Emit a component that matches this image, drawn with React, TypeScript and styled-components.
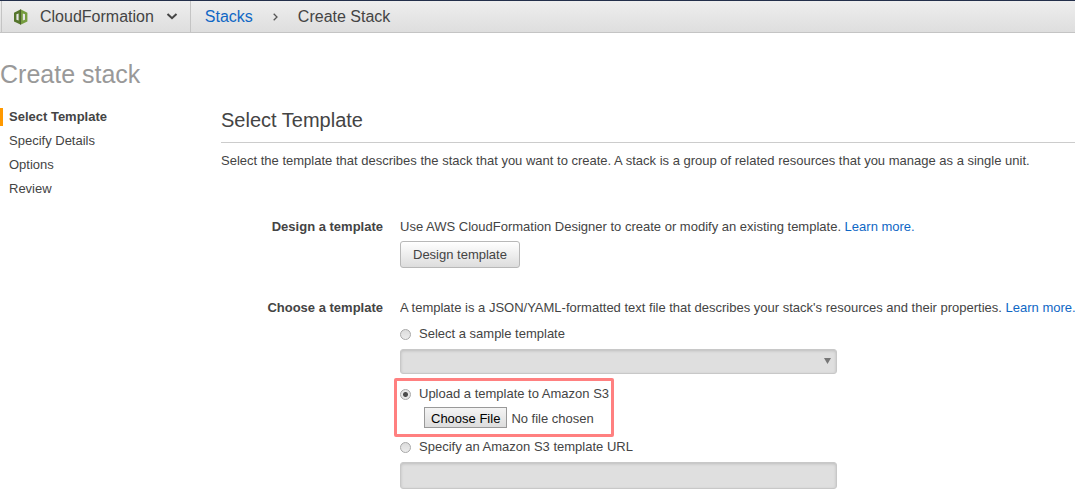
import React, { useState } from 'react';
import styled, { createGlobalStyle } from 'styled-components';

const GlobalStyle = createGlobalStyle`
  *, *::before, *::after { box-sizing: border-box; }
  body {
    margin: 0;
    background: #fff;
    color: #444;
    font: 13px/18px "Liberation Sans", Arial, sans-serif;
  }
  h1, h2, p { margin: 0; font-weight: normal; }
`;

const TopBar = styled.header`
  display: flex;
  align-items: stretch;
  height: 33px;
  border-top: 1px solid #232f4b;
  border-bottom: 1px solid #c4c4c4;
  background: linear-gradient(#eeeeee, #dedede);
  font-size: 16px;
`;

const ServiceMenu = styled.button`
  display: flex;
  align-items: center;
  margin: 0 0 0 1px;
  padding: 0 12px 0 11px;
  border: solid #c4c4c4;
  border-width: 0 1px;
  background: none;
  color: #444;
  font: inherit;
`;

const ServiceName = styled.span`
  padding: 0 12px 0 11px;
`;

const Breadcrumbs = styled.nav`
  display: flex;
  align-items: center;
  gap: 20px;
  padding-left: 14px;
`;

const Link = styled.a`
  color: #0f67c5;
  text-decoration: none;
`;

const PageTitle = styled.h1`
  padding: 27px 0 19px;
  color: #999;
  font-size: 25px;
  line-height: 29px;
`;

const Layout = styled.div`
  display: grid;
  grid-template-columns: 221px minmax(0, 1fr);
`;

const Steps = styled.nav`
  display: flex;
  flex-direction: column;
  gap: 6px;
`;

const Step = styled.a<{ $active?: boolean }>`
  padding-left: 6px;
  border-left: 3px solid ${(p) => (p.$active ? '#ff9900' : 'transparent')};
  color: #444;
  font-weight: ${(p) => (p.$active ? 'bold' : 'normal')};
  text-decoration: none;
`;

const SectionTitle = styled.h2`
  padding-bottom: 10px;
  border-bottom: 1px solid #ccc;
  font-size: 20px;
  line-height: 24px;
`;

const Intro = styled.p`
  padding: 9px 0 48px;
`;

const FormRow = styled.section`
  display: grid;
  grid-template-columns: 162px minmax(0, 1fr);
  column-gap: 17px;
  margin-bottom: 31px;
  &:last-child { margin-bottom: 0; }
`;

const RowLabel = styled.div`
  font-weight: bold;
  text-align: right;
`;

const RowBody = styled.div`
  display: flex;
  flex-direction: column;
  align-items: flex-start;
`;

const Description = styled.p`
  max-width: 100%;
  overflow: hidden;
  white-space: nowrap;
`;

const DesignButton = styled.button`
  height: 27px;
  margin-top: 5px;
  padding: 0 12px;
  border: 1px solid #b8b8b8;
  border-radius: 3px;
  background: linear-gradient(#ffffff, #dddddd);
  color: #444;
  font: inherit;
`;

const SourceOptions = styled.div`
  display: flex;
  flex-direction: column;
  width: 437px;
  max-width: 100%;
  margin-top: 7px;
`;

const RadioLabel = styled.label`
  display: flex;
  align-items: center;
  gap: 8px;
  height: 20px;
  white-space: nowrap;
`;

const Radio = styled.input`
  appearance: none;
  flex: none;
  width: 11px;
  height: 11px;
  margin: 0;
  border: 1px solid #a8a8a8;
  border-radius: 50%;
  background: linear-gradient(#dcdcdc, #ececec);
  &:checked {
    background: radial-gradient(circle, #4c4c4c 2px, #e6e6e6 3px);
  }
`;

const SelectField = styled.div`
  display: grid;
  align-items: center;
  margin: 5px 0 4px;
  > * { grid-area: 1 / 1; }
  > svg { justify-self: end; z-index: 1; margin: 0 6px 2px 0; pointer-events: none; }
`;

const Select = styled.select`
  appearance: none;
  width: 100%;
  height: 25px;
  border: 1px solid #c8c8c8;
  border-radius: 3px;
  background: #dfdfdf;
  box-shadow: inset 0 1px 3px #bdbdbd;
  font: inherit;
  &:disabled { opacity: 1; }
`;

const UrlInput = styled.input`
  width: 100%;
  height: 27px;
  margin-top: 5px;
  border: 1px solid #c8c8c8;
  border-radius: 3px;
  background: #dfdfdf;
  box-shadow: inset 0 1px 3px #bdbdbd;
  font: inherit;
`;

const Highlight = styled.div`
  align-self: flex-start;
  width: 220px;
  margin-left: -6px;
  padding: 3px;
  border: 3px solid #ff8080;
  border-radius: 2px;
`;

const FileInput = styled.input`
  display: block;
  width: 180px;
  height: 21px;
  margin: 3px 0 3px 24px;
  color: #444;
  font: inherit;
  line-height: 21px;
  &::file-selector-button {
    height: 21px;
    margin: 0 4px 0 0;
    padding: 0 6px;
    border: 1px solid #999;
    border-radius: 0;
    background: linear-gradient(#f4f4f4, #dddddd);
    color: #000;
    font: inherit;
  }
`;

type Source = 'sample' | 'upload' | 'url';

const steps = ['Select Template', 'Specify Details', 'Options', 'Review'];

function CloudFormationIcon() {
  return (
    <svg width="16" height="16" viewBox="0 0 16 16" aria-hidden="true">
      <path d="M1 3.8 L7.4 0.4 V15.6 L1 12.6Z M3.4 5.2 V10.8 L5.6 11.4 V4.6Z" fill="#55752c" fillRule="evenodd" />
      <path d="M14.4 3.8 L8 0.4 V15.6 L14.4 12.6Z M12 5.2 V10.8 L9.8 11.4 V4.6Z" fill="#759c3e" fillRule="evenodd" />
      <path d="M7 0.6 L8 0.2 V15.8 L7 15.4Z" fill="#4b612c" />
    </svg>
  );
}

export default function App() {
  const [source, setSource] = useState<Source>('upload');
  return (
    <>
      <GlobalStyle />
      <TopBar>
        <ServiceMenu type="button">
          <CloudFormationIcon />
          <ServiceName>CloudFormation</ServiceName>
          <svg width="12" height="7" viewBox="0 0 12 7" aria-hidden="true">
            <path d="M1.5 1 L6 5.2 L10.5 1" fill="none" stroke="#444" strokeWidth="2" />
          </svg>
        </ServiceMenu>
        <Breadcrumbs aria-label="Breadcrumb">
          <Link href="#stacks">Stacks</Link>
          <svg width="5" height="8" viewBox="0 0 5 8" aria-hidden="true">
            <path d="M0.7 0.7 L4 4 L0.7 7.3" fill="none" stroke="#555" strokeWidth="1.3" />
          </svg>
          <span>Create Stack</span>
        </Breadcrumbs>
      </TopBar>
      <PageTitle>Create stack</PageTitle>
      <Layout>
        <Steps aria-label="Steps">
          {steps.map((step, i) => (
            <Step key={step} href="#step" $active={i === 0}>{step}</Step>
          ))}
        </Steps>
        <main>
          <SectionTitle>Select Template</SectionTitle>
          <Intro>
            Select the template that describes the stack that you want to create. A stack is a group of related resources that you manage as a single unit.
          </Intro>
          <FormRow>
            <RowLabel>Design a template</RowLabel>
            <RowBody>
              <Description>
                Use AWS CloudFormation Designer to create or modify an existing template. <Link href="#designer">Learn more.</Link>
              </Description>
              <DesignButton type="button">Design template</DesignButton>
            </RowBody>
          </FormRow>
          <FormRow>
            <RowLabel>Choose a template</RowLabel>
            <RowBody>
              <Description>
                A template is a JSON/YAML-formatted text file that describes your stack's resources and their properties. <Link href="#templates">Learn more.</Link>
              </Description>
              <SourceOptions>
                <RadioLabel>
                  <Radio type="radio" name="source" checked={source === 'sample'} onChange={() => setSource('sample')} />
                  Select a sample template
                </RadioLabel>
                <SelectField>
                  <Select aria-label="Sample template" disabled={source !== 'sample'} />
                  <svg width="7" height="6" viewBox="0 0 7 6" aria-hidden="true">
                    <path d="M0 0 H7 L3.5 6Z" fill="#777" />
                  </svg>
                </SelectField>
                <Highlight>
                  <RadioLabel>
                    <Radio type="radio" name="source" checked={source === 'upload'} onChange={() => setSource('upload')} />
                    Upload a template to Amazon S3
                  </RadioLabel>
                  <FileInput type="file" aria-label="Template file" />
                </Highlight>
                <RadioLabel>
                  <Radio type="radio" name="source" checked={source === 'url'} onChange={() => setSource('url')} />
                  Specify an Amazon S3 template URL
                </RadioLabel>
                <UrlInput type="text" aria-label="Amazon S3 template URL" disabled={source !== 'url'} />
              </SourceOptions>
            </RowBody>
          </FormRow>
        </main>
      </Layout>
    </>
  );
}
